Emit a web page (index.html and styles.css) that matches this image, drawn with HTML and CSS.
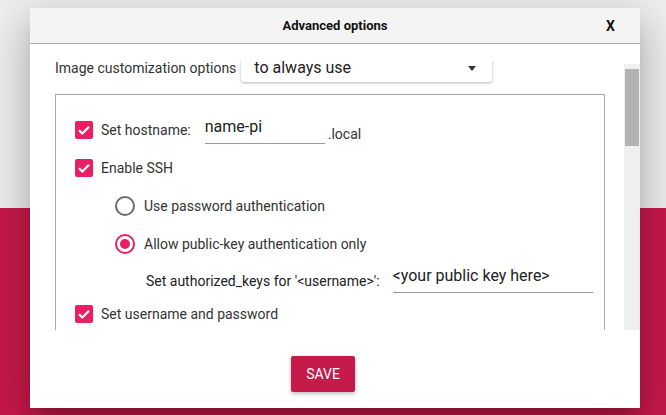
FILE: index.html
```html
<!DOCTYPE html>
<html>
<head>
<meta charset="utf-8">
<link rel="stylesheet" href="styles.css">
</head>
<body>
<div class="page">
  <div class="page-top"></div>
  <div class="page-bottom"></div>
</div>
<div class="dialog">
  <div class="dialog-header">
    <div class="dialog-title">Advanced options</div>
    <div class="dialog-close">X</div>
  </div>
  <div class="scroll-area">
    <div class="scroll-view">
      <div class="scroll-content">
        <div class="custom-row">
          <span class="custom-label">Image customization options</span>
          <div class="dropdown">
            <span class="dropdown-text">to always use</span>
            <span class="dropdown-arrow"></span>
          </div>
        </div>
        <div class="fieldset">
          <div class="row">
            <span class="checkbox"><svg viewBox="0 0 18 18" width="18" height="18"><path d="M4 9.3l3.3 3.2L14 5.8" fill="none" stroke="#fff" stroke-width="2.2"/></svg></span>
            <span class="label">Set hostname:</span>
            <div class="text-input host-input">name-pi</div>
            <span class="label suffix">.local</span>
          </div>
          <div class="row">
            <span class="checkbox"><svg viewBox="0 0 18 18" width="18" height="18"><path d="M4 9.3l3.3 3.2L14 5.8" fill="none" stroke="#fff" stroke-width="2.2"/></svg></span>
            <span class="label">Enable SSH</span>
          </div>
          <div class="row radio-row">
            <span class="radio"></span>
            <span class="label">Use password authentication</span>
          </div>
          <div class="row radio-row">
            <span class="radio checked"><span class="radio-dot"></span></span>
            <span class="label">Allow public-key authentication only</span>
          </div>
          <div class="row keys-row">
            <span class="keys-label">Set authorized_keys for '&lt;username&gt;':</span>
            <div class="text-input keys-input">&lt;your public key here&gt;</div>
          </div>
          <div class="row">
            <span class="checkbox"><svg viewBox="0 0 18 18" width="18" height="18"><path d="M4 9.3l3.3 3.2L14 5.8" fill="none" stroke="#fff" stroke-width="2.2"/></svg></span>
            <span class="label">Set username and password</span>
          </div>
        </div>
      </div>
    </div>
    <div class="scrollbar"><div class="scroll-thumb"></div></div>
  </div>
  <div class="dialog-footer">
    <button class="save-btn">SAVE</button>
  </div>
</div>
</body>
</html>
```

FILE: styles.css
```css
html, body {
  margin: 0;
  padding: 0;
  width: 666px;
  height: 415px;
  overflow: hidden;
  font-family: Roboto, "Liberation Sans", sans-serif;
}

.page {
  display: flex;
  flex-direction: column;
  width: 666px;
  height: 415px;
}

.page-top {
  height: 208px;
  background: #efefef;
}

.page-bottom {
  flex: 1;
  background: #c8194b;
}

.dialog {
  position: absolute;
  left: 30px;
  top: 8px;
  width: 610px;
  height: 400px;
  background: #fff;
  display: flex;
  flex-direction: column;
  box-shadow: 0 11px 15px -7px rgba(0,0,0,0.2), 0 24px 38px 3px rgba(0,0,0,0.14), 0 9px 46px 8px rgba(0,0,0,0.12);
}

.dialog-header {
  height: 35px;
  background: #f4f4f4;
  border-bottom: 1px solid #ababab;
  display: flex;
  align-items: center;
  justify-content: center;
  position: relative;
}

.dialog-title {
  font-size: 13px;
  font-weight: bold;
  color: #111;
}

.dialog-close {
  position: absolute;
  right: 25px;
  top: 10px;
  font-size: 14px;
  font-weight: bold;
  color: #111;
}

.scroll-area {
  margin-top: 17px;
  height: 269px;
  display: flex;
}

.scroll-view {
  flex: 1;
  overflow: hidden;
}

.scroll-content {
  margin-top: -11px;
  padding-left: 25px;
}

.custom-row {
  display: flex;
  align-items: center;
  height: 32px;
}

.custom-label {
  font-size: 14px;
  color: #333;
  margin-top: 4px;
}

.dropdown {
  margin-left: 5px;
  width: 251px;
  height: 32px;
  box-sizing: border-box;
  border-radius: 3px;
  background: #fff;
  box-shadow: 0 1px 3px rgba(0,0,0,0.3);
  display: flex;
  align-items: center;
  justify-content: space-between;
  padding: 3px 16px 0 13px;
}

.dropdown-text {
  font-size: 16px;
  line-height: 17px;
  color: #222;
}

.dropdown-arrow {
  width: 0;
  height: 0;
  border-left: 4.5px solid transparent;
  border-right: 4.5px solid transparent;
  border-top: 5px solid #333;
  margin-top: 1px;
}

.fieldset {
  margin-top: 12px;
  width: 550px;
  box-sizing: border-box;
  min-height: 300px;
  border: 1px solid #a8a8a8;
  padding: 16px 8px 16px 19px;
}

.row {
  display: flex;
  align-items: center;
  height: 38px;
}

.checkbox {
  width: 18px;
  height: 18px;
  border-radius: 2px;
  background: #e91e63;
  display: flex;
}

.label {
  font-size: 14px;
  color: #333;
  margin-left: 8px;
  white-space: nowrap;
}

.text-input {
  font-size: 16px;
  line-height: 20px;
  color: #222;
  padding-bottom: 6px;
  border-bottom: 1px solid #9a9a9a;
  flex-shrink: 0;
  white-space: nowrap;
}

.host-input {
  margin-left: 14px;
  width: 120px;
}

.suffix {
  margin-left: 3px;
  margin-top: 8px;
}

.radio-row {
  padding-left: 40px;
}

.radio {
  width: 20px;
  height: 20px;
  box-sizing: border-box;
  border: 2px solid #6b6b6b;
  border-radius: 50%;
  display: flex;
  align-items: center;
  justify-content: center;
}

.radio.checked {
  border-color: #e91e63;
}

.radio-dot {
  width: 10px;
  height: 10px;
  border-radius: 50%;
  background: #e91e63;
}

.radio-row .label {
  margin-left: 9px;
}

.keys-row {
  padding-left: 71px;
  height: 32px;
}

.keys-label {
  font-size: 14px;
  color: #222;
  margin-top: 4px;
  white-space: nowrap;
  flex-shrink: 0;
}

.keys-input {
  margin-left: 13px;
  width: 200px;
}

.scrollbar {
  margin-top: 3px;
  width: 16px;
  background: #efefef;
  display: flex;
  flex-direction: column;
  align-items: center;
}

.scroll-thumb {
  margin-top: 5px;
  width: 14px;
  height: 77px;
  background: #b3b3b3;
}

.dialog-footer {
  flex: 1;
  display: flex;
  align-items: flex-start;
  padding-top: 26px;
  padding-left: 261px;
}

.save-btn {
  height: 36px;
  width: 64px;
  padding: 0;
  border: none;
  border-radius: 2px;
  background: #c51a4a;
  color: #fff;
  font-family: Roboto, "Liberation Sans", sans-serif;
  font-size: 14px;
  box-shadow: 0 2px 4px rgba(0,0,0,0.25);
}
```
